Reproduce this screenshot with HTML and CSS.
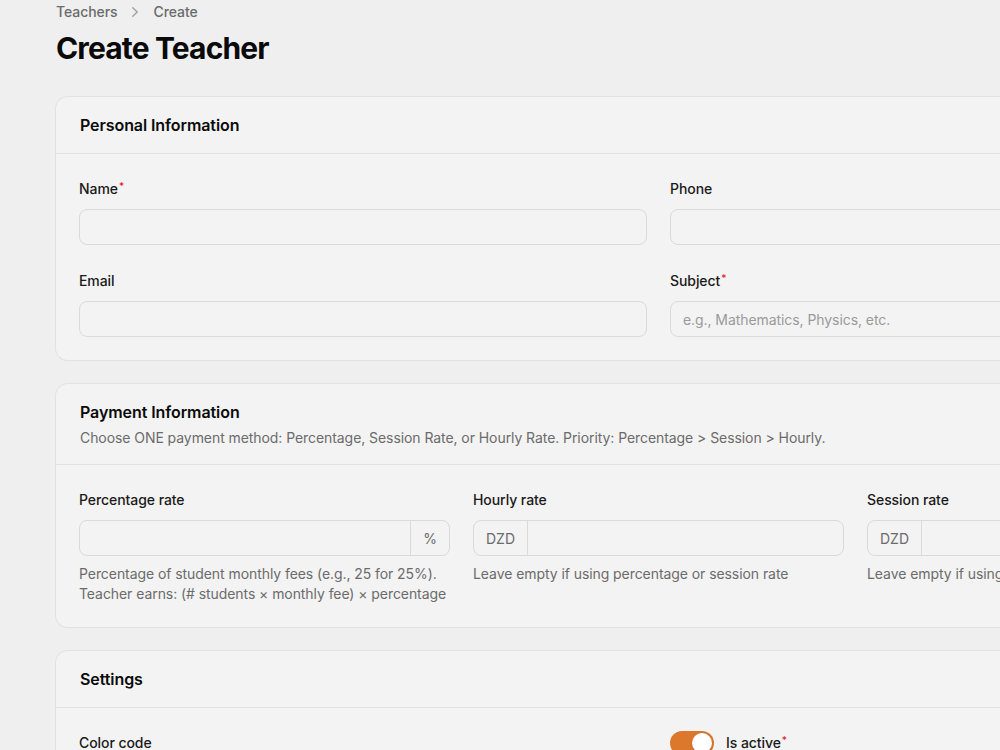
FILE: index.html
```html
<!DOCTYPE html>
<html lang="en">
<head>
  <meta charset="UTF-8">
  <meta name="viewport" content="width=device-width, initial-scale=1.0">
  <title>Create Teacher</title>
  <link rel="stylesheet" href="styles.css">
</head>
<body>
  <div class="page">
    <header class="page-header">
      <nav class="breadcrumbs">
        <span class="crumb">Teachers</span>
        <svg class="crumb-sep" viewBox="0 0 20 20" fill="currentColor" aria-hidden="true">
          <path fill-rule="evenodd" d="M7.21 14.77a.75.75 0 0 1 .02-1.06L11.168 10 7.23 6.29a.75.75 0 1 1 1.04-1.08l4.5 4.25a.75.75 0 0 1 0 1.08l-4.5 4.25a.75.75 0 0 1-1.06-.02Z" clip-rule="evenodd"/>
        </svg>
        <span class="crumb">Create</span>
      </nav>
      <h1 class="page-title">Create Teacher</h1>
    </header>

    <form class="form">
      <!-- Personal -->
      <section class="card">
        <div class="card-header">
          <h2 class="card-title">Personal Information</h2>
        </div>
        <div class="card-body grid-2">
          <div class="field">
            <label class="label">Name<sup class="req">*</sup></label>
            <input class="input" type="text">
          </div>
          <div class="field">
            <label class="label">Phone</label>
            <input class="input" type="text">
          </div>
          <div class="field">
            <label class="label">Email</label>
            <input class="input" type="email">
          </div>
          <div class="field">
            <label class="label">Subject<sup class="req">*</sup></label>
            <input class="input" type="text" placeholder="e.g., Mathematics, Physics, etc.">
          </div>
        </div>
      </section>

      <!-- Payment -->
      <section class="card">
        <div class="card-header">
          <h2 class="card-title">Payment Information</h2>
          <p class="card-desc">Choose ONE payment method: Percentage, Session Rate, or Hourly Rate. Priority: Percentage &gt; Session &gt; Hourly.</p>
        </div>
        <div class="card-body grid-3">
          <div class="field">
            <label class="label">Percentage rate</label>
            <div class="input-group">
              <input class="group-input" type="text">
              <span class="addon addon-right">%</span>
            </div>
            <p class="hint">Percentage of student monthly fees (e.g., 25 for 25%). Teacher earns: (# students × monthly fee) × percentage</p>
          </div>
          <div class="field">
            <label class="label">Hourly rate</label>
            <div class="input-group">
              <span class="addon addon-left">DZD</span>
              <input class="group-input" type="text">
            </div>
            <p class="hint">Leave empty if using percentage or session rate</p>
          </div>
          <div class="field">
            <label class="label">Session rate</label>
            <div class="input-group">
              <span class="addon addon-left">DZD</span>
              <input class="group-input" type="text">
            </div>
            <p class="hint">Leave empty if using percentage or hourly rate</p>
          </div>
        </div>
      </section>

      <!-- Settings -->
      <section class="card">
        <div class="card-header">
          <h2 class="card-title">Settings</h2>
        </div>
        <div class="card-body grid-2">
          <div class="field">
            <label class="label">Color code</label>
            <input class="input" type="text">
          </div>
          <div class="field">
            <div class="toggle-row">
              <span class="toggle is-on"><span class="knob"></span></span>
              <label class="label">Is active<sup class="req">*</sup></label>
            </div>
          </div>
        </div>
      </section>
    </form>
  </div>
</body>
</html>
```

FILE: styles.css
```css
html, body {
  overflow: hidden;
}

body {
  margin: 0;
  background: #efefef;
  color: #0a0a0a;
  font-family: 'Inter', 'Liberation Sans', sans-serif;
  -webkit-font-smoothing: antialiased;
}

.page {
  width: 1205px;
  padding: 2px 0 40px 56px;
}

.page-header {
  display: flex;
  flex-direction: column;
  gap: 8px;
  margin-bottom: 31px;
}

.breadcrumbs {
  display: flex;
  align-items: center;
  gap: 8px;
  font-size: 14px;
  line-height: 20px;
  font-weight: 500;
  color: #6b6b6b;
  letter-spacing: -0.07px;
}

.crumb-sep {
  width: 20px;
  height: 20px;
  color: #a3a3a3;
}

.page-title {
  margin: 0;
  font-size: 30px;
  line-height: 36px;
  font-weight: 700;
  letter-spacing: -0.85px;
}

.form {
  display: flex;
  flex-direction: column;
  gap: 24px;
}

.card {
  background: #f3f3f3;
  border-radius: 12px;
  box-shadow: 0 0 0 1px #e2e2e2, 0 1px 2px rgba(0, 0, 0, 0.04);
}

.card-header {
  padding: 16px 24px;
  border-bottom: 1px solid #e2e2e2;
}

.card-title {
  margin: 0;
  font-size: 16px;
  line-height: 24px;
  font-weight: 600;
  color: #0a0a0a;
  letter-spacing: -0.08px;
}

.card-desc {
  margin: 4px 0 0;
  font-size: 14px;
  line-height: 20px;
  color: #6b6b6b;
  letter-spacing: -0.07px;
}

.card-body {
  padding: 23px;
  display: grid;
  gap: 24px 23px;
}

.grid-2 {
  grid-template-columns: repeat(2, 1fr);
}

.grid-3 {
  grid-template-columns: repeat(3, 1fr);
}

.field {
  display: flex;
  flex-direction: column;
  gap: 8px;
}

.label {
  font-size: 14px;
  line-height: 24px;
  font-weight: 500;
  color: #1a1a1a;
  letter-spacing: -0.07px;
}

.req {
  position: relative;
  top: -0.45em;
  vertical-align: baseline;
  color: #dc2626;
  font-weight: 500;
  font-size: 10px;
  line-height: 0;
  margin-left: 1px;
}

.input,
.input-group {
  box-sizing: border-box;
  height: 36px;
  border: 1px solid #dadada;
  border-radius: 8px;
  background: #f3f3f3;
}

.input {
  width: 100%;
  padding: 6px 12px;
  font-family: inherit;
  font-size: 14px;
  color: #0a0a0a;
  outline: none;
  letter-spacing: -0.07px;
}

.input::placeholder {
  color: #9a9a9a;
}

.input-group {
  display: flex;
  overflow: hidden;
}

.group-input {
  flex: 1;
  min-width: 0;
  border: none;
  background: transparent;
  padding: 6px 12px;
  font-family: inherit;
  font-size: 14px;
  outline: none;
}

.addon {
  display: flex;
  align-items: center;
  padding: 0 12px;
  font-size: 14px;
  color: #6b6b6b;
}

.addon-left {
  border-right: 1px solid #dadada;
}

.addon-right {
  border-left: 1px solid #dadada;
}

.hint {
  margin: 0;
  font-size: 14px;
  line-height: 20px;
  color: #6b6b6b;
  letter-spacing: -0.07px;
}

.toggle-row {
  display: flex;
  align-items: center;
  gap: 12px;
  height: 24px;
}

.toggle {
  position: relative;
  width: 44px;
  height: 24px;
  border-radius: 12px;
  background: #d4d4d4;
  flex-shrink: 0;
}

.toggle.is-on {
  background: #db782c;
}

.knob {
  position: absolute;
  top: 2px;
  left: 2px;
  width: 20px;
  height: 20px;
  border-radius: 50%;
  background: #fff;
  box-shadow: 0 1px 3px rgba(0, 0, 0, 0.15);
}

.toggle.is-on .knob {
  left: 22px;
}
```
